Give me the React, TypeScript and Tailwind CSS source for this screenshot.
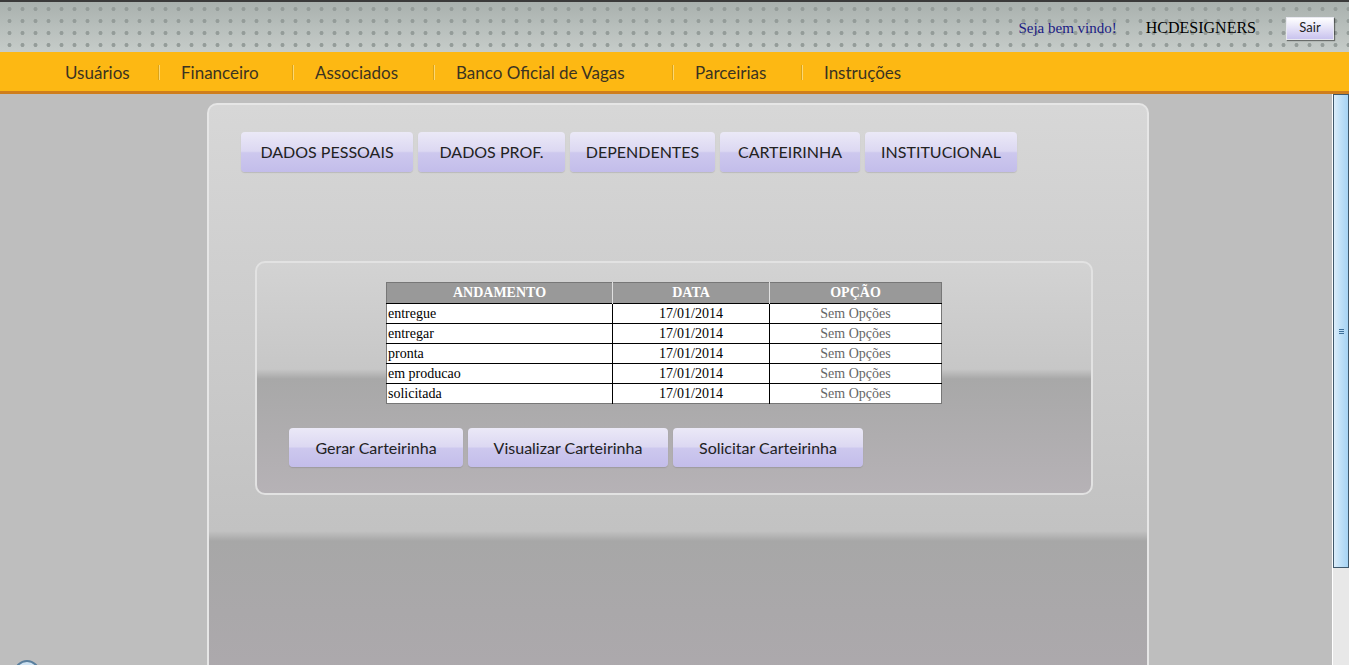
import { Fragment } from "react";

const navItems = [
  { label: "Usuários", w: "w-[116px]" },
  { label: "Financeiro", w: "w-[132px]" },
  { label: "Associados", w: "w-[139px]" },
  { label: "Banco Oficial de Vagas", w: "w-[237px]" },
  { label: "Parceirias", w: "w-[127px]" },
  { label: "Instruções", w: "w-[140px]" },
];

const tabs = [
  { label: "DADOS PESSOAIS", w: "w-[172px]" },
  { label: "DADOS PROF.", w: "w-[147px]" },
  { label: "DEPENDENTES", w: "w-[145px]" },
  { label: "CARTEIRINHA", w: "w-[140px]" },
  { label: "INSTITUCIONAL", w: "w-[152px]" },
];

const actions = [
  { label: "Gerar Carteirinha", w: "w-[174px]" },
  { label: "Visualizar Carteirinha", w: "w-[200px]" },
  { label: "Solicitar Carteirinha", w: "w-[190px]" },
];

const rows = ["entregue", "entregar", "pronta", "em producao", "solicitada"];

const gothic = "font-['Lato','Open_Sans',sans-serif]";
const serif = "font-['Liberation_Serif','Times_New_Roman',serif]";

const LilacButton = ({ label, w, h }: { label: string; w: string; h: string }) => (
  <button
    className={`${w} ${h} ${gothic} text-[16px] text-[#222] rounded-[4px]
      bg-[linear-gradient(to_bottom,#ebe9f7_0%,#dcd8f2_48%,#cdc8ee_52%,#c3bdea_100%)]
      shadow-[0_1px_1px_rgba(0,0,0,0.12)] flex items-center justify-center`}
  >
    {label}
  </button>
);

const App = () => {
  return (
    <div className="relative h-[665px] w-[1349px] overflow-hidden bg-[#bebebe]">
      {/* top header with dots */}
      <div
        className="h-[52px] border-t-2 border-[#3a3a3a] flex items-center justify-end
        bg-[radial-gradient(circle,#949c99_1.7px,transparent_2.3px),linear-gradient(to_bottom,#a9b1ae,#c6ccc9)]
        bg-[length:13px_12px,100%_100%] bg-[position:3px_1px,0_0]"
      >
        <span className={`${serif} text-[15px] text-[#1b1b84] mr-[29px] mt-[2px] ml-0`}>
          Seja bem vindo!
        </span>
        <span className={`${serif} text-[16px] text-black mr-[30px] mt-[2px]`}>
          HCDESIGNERS
        </span>
        <button
          className={`${gothic} w-[48px] h-[23px] text-[13px] text-[#222] mr-[15px] mt-[2px]
          bg-[linear-gradient(to_bottom,#ffffff,#e2def6_55%,#c9c3ee)]
          border border-[#e8e8f0] shadow-[1px_1px_1px_rgba(0,0,0,0.45)]`}
        >
          Sair
        </button>
      </div>

      {/* orange nav */}
      <div className="h-[42px] bg-[#fdb813] border-b-[3px] border-[#cf7e1c] flex items-center pl-[42px] pt-[2px]">
        {navItems.map((n, i) => (
          <Fragment key={n.label}>
            {i > 0 && (
              <span className="h-[15px] w-[2px] border-l border-[#dba316] border-r border-r-[#fbd773]" />
            )}
            <span
              className={`${n.w} ${gothic} text-[17px] text-[#3b3321] ${
                i === 0 ? "pl-[23px]" : "pl-[21px]"
              }`}
            >
              {n.label}
            </span>
          </Fragment>
        ))}
      </div>

      <div className="flex">
        {/* page body */}
        <div className="flex-1 pt-[9px]">
          <div
            className="ml-[207px] w-[942px] h-[580px] rounded-t-[10px] border-2 border-b-0 border-[#e6e6e6]
            bg-[linear-gradient(to_bottom,#d7d7d7_0px,#c2c2c2_426px,#a7a7a7_436px,#ada9ad_100%)]
            pt-[27px] pl-[32px]"
          >
            <div className="flex gap-[5px]">
              {tabs.map((t) => (
                <LilacButton key={t.label} label={t.label} w={t.w} h="h-[40px]" />
              ))}
            </div>

            <div
              className="mt-[89px] ml-[14px] w-[838px] h-[234px] rounded-[10px] border-2 border-[#e2e2e2]
              bg-[linear-gradient(to_bottom,#d3d3d3_0px,#c7c7c7_106px,#a8a8a8_116px,#b6b2b6_100%)]
              pt-[19px] pl-[32px]"
            >
              <table className={`${serif} ml-[97px] w-[556px] text-[14px] border-collapse border border-[#777]`}>
                <thead>
                  <tr className="h-[20px] bg-[#999999] text-white font-bold">
                    <th className="w-[226px] p-0 leading-[20px] border-r border-[#e0e0e0]">ANDAMENTO</th>
                    <th className="w-[157px] p-0 leading-[20px] border-r border-[#e0e0e0]">DATA</th>
                    <th className="p-0 leading-[20px]">OPÇÃO</th>
                  </tr>
                </thead>
                <tbody className="bg-white">
                  {rows.map((r) => (
                    <tr key={r} className="h-[20px] border-t border-black">
                      <td className="p-0 pl-[1px] leading-[19px] text-black border-r border-black">{r}</td>
                      <td className="p-0 leading-[19px] text-center text-black border-r border-black">17/01/2014</td>
                      <td className="p-0 leading-[19px] text-center text-[#666]">Sem Opções</td>
                    </tr>
                  ))}
                </tbody>
              </table>

              <div className="flex gap-[5px] mt-[24px]">
                {actions.map((a) => (
                  <LilacButton key={a.label} label={a.label} w={a.w} h="h-[39px]" />
                ))}
              </div>
            </div>
          </div>
        </div>

        {/* scrollbar */}
        <div className="w-[17px] flex flex-col border-l border-white">
          <div
            className="h-[474px] border border-[#40596c] bg-[linear-gradient(to_right,#dcedfa_0%,#c3e2f8_40%,#a6d3f3_100%)]
            flex items-center justify-center"
          >
            <div className="flex flex-col gap-[1px]">
              <span className="block w-[5px] h-px bg-[#3d6f99]" />
              <span className="block w-[5px] h-px bg-[#3d6f99]" />
              <span className="block w-[5px] h-px bg-[#3d6f99]" />
            </div>
          </div>
          <div className="flex-1 bg-[#e8e8e8]" />
        </div>
      </div>

      {/* clipped circle icon at bottom-left */}
      <div className="absolute left-[14px] top-[660px] w-[26px] h-[26px] rounded-full border-2 border-[#5a7f9e] bg-[#cfe2f1]" />
    </div>
  );
};

export default App;
